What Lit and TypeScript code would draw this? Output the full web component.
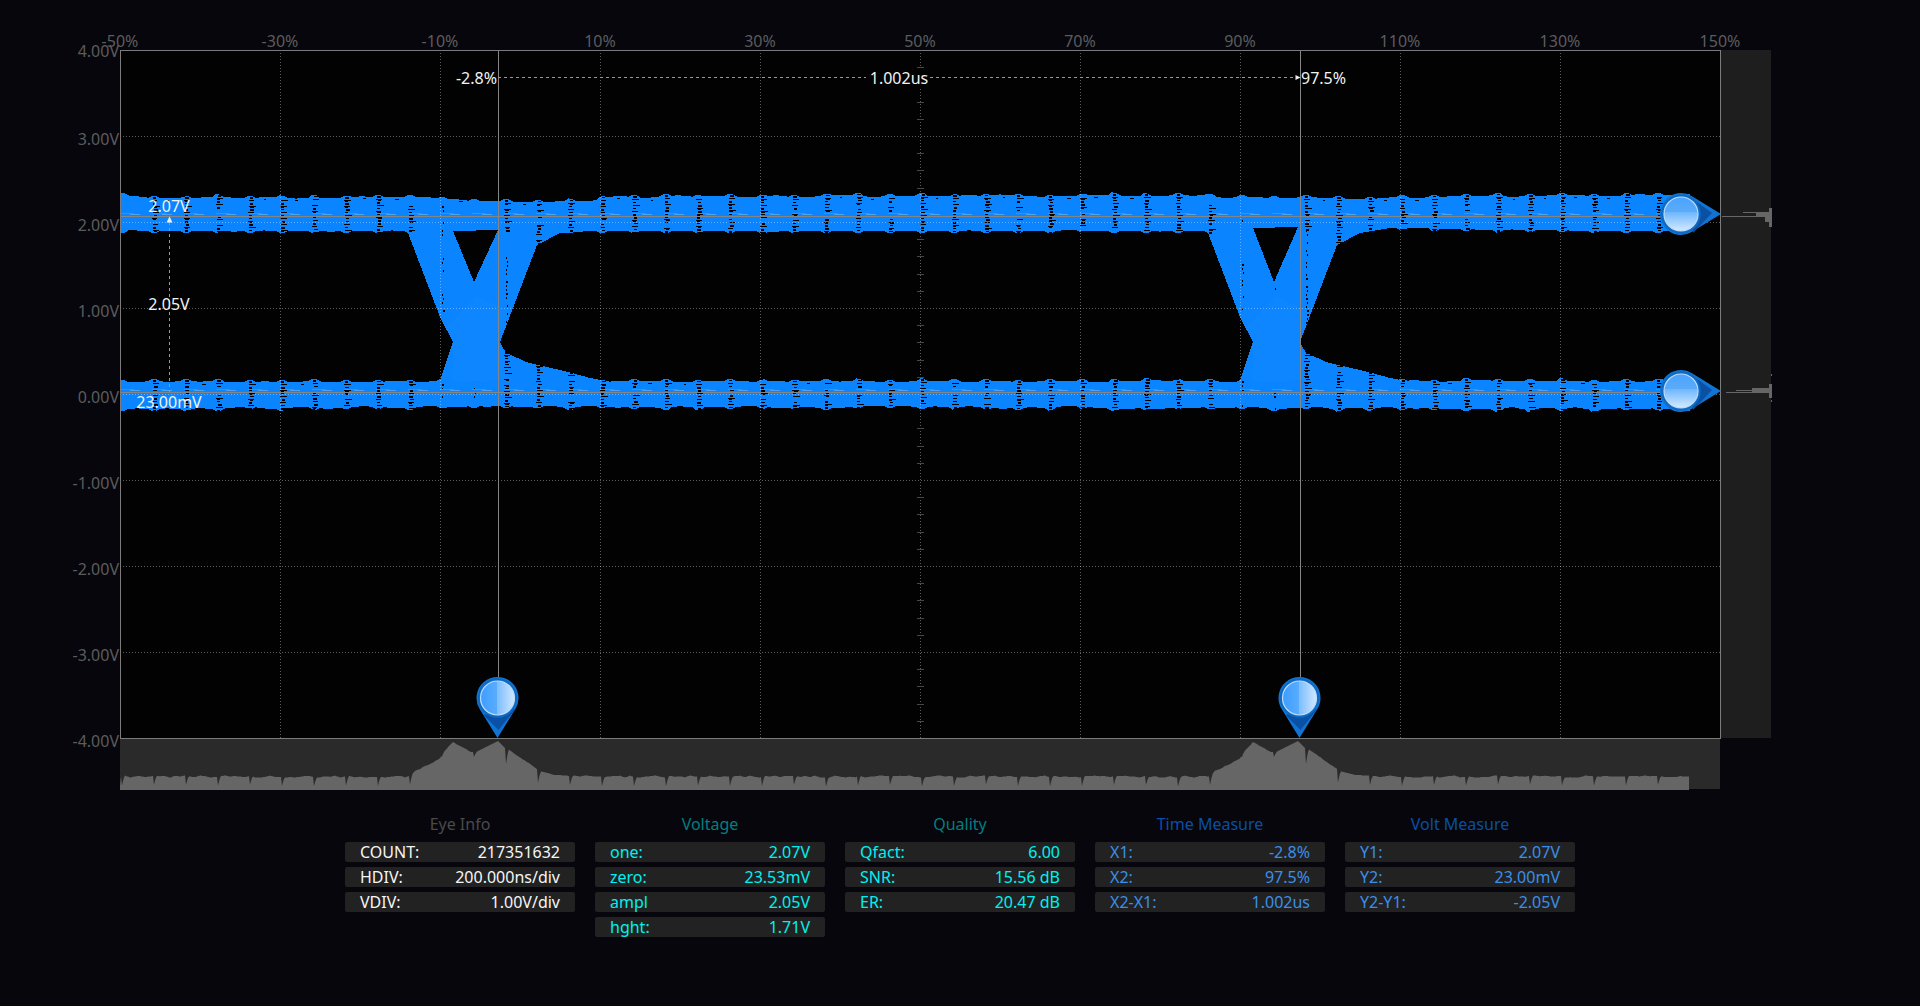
import { LitElement, html, css, svg } from "lit";
import { customElement } from "lit/decorators.js";

type Pt = [number, number];

function rng(seed: number) {
  let s = seed >>> 0;
  return () => {
    s = (s + 0x6d2b79f5) >>> 0;
    let t = s;
    t = Math.imul(t ^ (t >>> 15), t | 1);
    t ^= t + Math.imul(t ^ (t >>> 7), t | 61);
    return ((t ^ (t >>> 14)) >>> 0) / 4294967296;
  };
}

function interp(pts: Pt[], x: number): number {
  if (x <= pts[0][0]) return pts[0][1];
  for (let i = 1; i < pts.length; i++) {
    if (x <= pts[i][0]) {
      const [x0, y0] = pts[i - 1];
      const [x1, y1] = pts[i];
      return y0 + ((y1 - y0) * (x - x0)) / (x1 - x0 || 1);
    }
  }
  return pts[pts.length - 1][1];
}

function noise(seed: number, amp: number, step = 16) {
  const r = rng(seed);
  const nodes: number[] = [];
  const count = Math.ceil(1700 / step) + 3;
  for (let i = 0; i < count; i++) nodes.push((r() - 0.5) * 2 * amp);
  return (x: number) => {
    const p = (x - 120) / step;
    const i = Math.max(0, Math.floor(p));
    const f = p - i;
    return nodes[i] * (1 - f) + nodes[i + 1] * f;
  };
}

const toPath = (pts: Pt[]) =>
  "M" + pts.map(([x, y]) => `${x} ${y}`).join("L") + "Z";

const X0 = 120;
const X1 = 1690;

const upTop: Pt[] = [[120, 194.5], [150, 197.5], [430, 197.5], [440, 199], [470, 201], [590, 201], [620, 196.5], [1200, 195.5], [1240, 198], [1370, 198], [1400, 197], [1690, 195]];
const upBot: Pt[] = [[120, 231], [1240, 231], [1252, 228], [1395, 228], [1500, 230], [1690, 231]];
const loTop: Pt[] = [[120, 381.5], [1690, 381]];
const loBot: Pt[] = [[120, 408.5], [440, 407], [1100, 407.5], [1690, 409]];

const nUT = noise(11, 1.5);
const nUB = noise(23, 0.6);
const nLT = noise(37, 0.9);
const nLB = noise(41, 1.6);

// each sampling column pushes the band edge out by a couple of pixels
const scallop = (x: number) => {
  const d = Math.abs(((x - 154 + 16) % 32 + 32) % 32 - 16);
  return d < 3 ? 2 : d < 6 ? 1 : 0;
};

const edge = (base: Pt[], n: (x: number) => number, dir: number) => (x: number) =>
  Math.round(interp(base, x) + n(x) + dir * scallop(x));

const fUT = edge(upTop, nUT, -1);
const fUB = edge(upBot, nUB, 1);
const fLT = edge(loTop, nLT, -1);
const fLB = edge(loBot, nLB, 1);

function band(top: (x: number) => number, bot: (x: number) => number): string {
  const a: Pt[] = [];
  const b: Pt[] = [];
  for (let x = X0; x <= X1; x += 2) {
    a.push([x, top(x)]);
    b.unshift([x, bot(x)]);
  }
  return toPath([...a, ...b]);
}

function eye(dx: number, triTop: number): string {
  const p: Pt[] = [
    [408, 225], [453, 225], [453, triTop], [474, 282], [498, triTop - 1], [498, 225], [590, 225],
    [590, 231 - (dx ? 3 : 0)], [560, 233], [537, 245], [500, 342], [505.7, 352.7], [528, 362.7], [567, 371.7], [590, 378], [612, 382],
    [612, 390], [440, 390], [440, 380], [453, 342], [440, 317], [408, 233],
  ];
  return toPath(p.map(([x, y]) => [x + dx, y] as Pt));
}

// black triangle mask keeps the eye opening clean where a scalloped band edge dips into it
const opening = (dx: number, triTop: number) =>
  toPath(([[453, triTop], [474, 282], [498, triTop - 1]] as Pt[]).map(([x, y]) => [x + dx, y] as Pt));

function stipple(): string {
  const r = rng(77);
  let d = "";
  const rect = (x: number, y: number, w: number, h: number) => {
    d += `M${x} ${y}h${w}v${h}h${-w}Z`;
  };
  const solid = (cx: number, y0: number, y1: number) => {
    let nextWide = y0 + 1 + Math.floor(r() * 3);
    for (let y = y0; y < y1; y += 3) {
      if (r() < 0.9) rect(cx - 1 + (r() < 0.3 ? 1 : 0), y, 3 + (r() < 0.35 ? 1 : 0), 1 + (r() < 0.55 ? 1 : 0));
      if (y >= nextWide) {
        const w = 5 + Math.floor(r() * 3);
        rect(cx - 2 + (r() < 0.5 ? 1 : 0), y, w, 1);
        nextWide = y + 4 + Math.floor(r() * 4);
      }
    }
  };
  const sparse = (cx: number, y0: number, y1: number, density = 0.45) => {
    for (let y = y0; y < y1; y += 4) {
      if (r() < density) rect(cx + (r() < 0.3 ? 1 : 0), y, 1 + (r() < 0.3 ? 1 : 0), 2);
    }
  };
  for (let cx = 154; cx < X1; cx += 32) {
    const rel = cx >= 1100 ? cx - 800 : cx;
    const ut = fUT(cx) + 1;
    const ub = fUB(cx);
    const lt = fLT(cx) + 1;
    const lb = fLB(cx);
    if (rel === 442) {
      sparse(cx, ut + 8, 317, 0.4);
      sparse(cx, lt, lb, 0.5);
    } else if (rel === 474) {
      sparse(cx, 284, 300, 0.2);
      sparse(cx, lt + 4, lb, 0.45);
    } else if (rel === 506) {
      solid(cx, ut, ub);
      sparse(cx, ub, 340, 0.6);
      solid(cx, 352, lb);
    } else if (rel === 538) {
      solid(cx, ut, 245);
      solid(cx, 363, lb);
    } else if (rel === 570) {
      solid(cx, ut, ub);
      solid(cx, 372, lb);
    } else if (rel === 410) {
      solid(cx, ut + 10, ub);
      solid(cx, lt, lb);
    } else {
      solid(cx, ut, ub);
      solid(cx, lt, lb);
    }
    if (cx + 16 < X1) {
      if (r() < 0.5) rect(cx + 12 + Math.floor(r() * 6), fUT(cx + 16) + 2, 2 + Math.floor(r() * 3), 1);
      if (r() < 0.3 && Math.abs(rel - 474) > 40) rect(cx + 10 + Math.floor(r() * 10), fLT(cx + 16) + 2, 2 + Math.floor(r() * 3), 1);
    }
  }
  return d;
}

const peak: Pt[] = [[410, 776], [415, 771], [430, 764], [440, 758], [443, 753], [453, 742], [471, 752], [476, 752], [498, 741], [503, 746], [506, 749], [508, 749], [537, 769], [540, 771], [555, 775], [570, 776]];

function histogram(): string {
  const n = noise(91, 1.1, 5);
  const pts: Pt[] = [[120, 790], [120, 786]];
  for (let x = 121; x <= 1689; x++) {
    const rel = x >= 1100 ? x - 800 : x;
    const inPeak = rel >= 410 && rel <= 570;
    let y = inPeak ? interp(peak, rel) : 776.5;
    y += inPeak ? n(x) * 0.3 : n(x);
    const phase = (x - 122) % 32;
    let depth = 9;
    if (rel > 436 && rel < 446) depth = 2;
    if (rel > 468 && rel < 478) depth = 5;
    if (rel > 500 && rel < 510) depth = 15;
    if (rel > 532 && rel < 542) depth = 13;
    if (phase === 0) y += depth;
    else if (phase === 1) y += depth * 0.55;
    else if (phase === 2) y += depth * 0.2;
    pts.push([x, Math.round(y * 2) / 2]);
  }
  pts.push([1689, 790]);
  return toPath(pts);
}

const D = {
  upper: band(fUT, fUB),
  lower: band(fLT, fLB),
  eyes: eye(0, 231) + eye(800, 228),
  openings: opening(0, 231) + opening(800, 228),
  dots: stipple(),
  hist: histogram(),
};

const xLabels = ["-50%", "-30%", "-10%", "10%", "30%", "50%", "70%", "90%", "110%", "130%", "150%"];
const yLabels = ["4.00V", "3.00V", "2.00V", "1.00V", "0.00V", "-1.00V", "-2.00V", "-3.00V", "-4.00V"];

const TEAR = "M0 40L17.87 11.03A21 21 0 1 0 -17.87 11.03Z";

const downPin = (cx: number) => svg`
  <g transform="translate(${cx} 698)">
    <path class="pin-body" d=${TEAR}></path>
    <path class="pin-shade" d="M-14 17L1 32L17.8 11.2L12 10Z"></path>
    <circle class="pin-ring" r="19.800"></circle>
    <circle class="pin-face-v" r="17"></circle>
  </g>`;

const rightPin = (cy: number) => svg`
  <g transform="translate(1681 ${cy})">
    <g transform="rotate(-90)">
      <path class="pin-body" d=${TEAR}></path>
      <path class="pin-shade" d="M-19 12L1 31L12 16L12 10Z"></path>
      <circle class="pin-ring" r="19.800"></circle>
    </g>
    <circle class="pin-face-h" r="17"></circle>
  </g>`;

interface Row { k: string; v: string; }
interface Group { title: string; tone: string; rows: Row[]; }

const groups: Group[] = [
  { title: "Eye Info", tone: "grey", rows: [
    { k: "COUNT:", v: "217351632" }, { k: "HDIV:", v: "200.000ns/div" }, { k: "VDIV:", v: "1.00V/div" },
  ] },
  { title: "Voltage", tone: "cyan", rows: [
    { k: "one:", v: "2.07V" }, { k: "zero:", v: "23.53mV" }, { k: "ampl", v: "2.05V" }, { k: "hght:", v: "1.71V" },
  ] },
  { title: "Quality", tone: "cyan", rows: [
    { k: "Qfact:", v: "6.00" }, { k: "SNR:", v: "15.56 dB" }, { k: "ER:", v: "20.47 dB" },
  ] },
  { title: "Time Measure", tone: "blue", rows: [
    { k: "X1:", v: "-2.8%" }, { k: "X2:", v: "97.5%" }, { k: "X2-X1:", v: "1.002us" },
  ] },
  { title: "Volt Measure", tone: "blue", rows: [
    { k: "Y1:", v: "2.07V" }, { k: "Y2:", v: "23.00mV" }, { k: "Y2-Y1:", v: "-2.05V" },
  ] },
];

@customElement("app-root")
export class AppRoot extends LitElement {
  static styles = css`
    :host {
      display: block;
      min-height: 100vh;
      background: #06060c;
      font-family: "Noto Sans", "Liberation Sans", sans-serif;
      font-size: 16px;
    }
    .chart { display: block; width: 1920px; height: 800px; }
    .plot-bg { fill: #020202; }
    .side { fill: #1e1e1e; }
    .hist-bg { fill: #2a2a2a; }
    .hist { fill: #666; }
    .side-mark { fill: #666; shape-rendering: crispEdges; }
    .wave { fill: #0a84ff; shape-rendering: crispEdges; }
    .opening { fill: #020202; shape-rendering: crispEdges; }
    .waist { fill: #4aa8ff; opacity: 0.07; }
    .dots { fill: #000; shape-rendering: crispEdges; }
    .streak { stroke: #2f94f8; stroke-width: 1; stroke-dasharray: 14 18; shape-rendering: crispEdges; }
    .streak2 { stroke: #4ea4f0; stroke-width: 1; stroke-dasharray: 10 22; shape-rendering: crispEdges; }
    .grid { stroke: #fff; stroke-opacity: 0.36; stroke-width: 1; stroke-dasharray: 1 2; shape-rendering: crispEdges; }
    .tick { stroke: #474747; stroke-width: 1; shape-rendering: crispEdges; }
    .cursor { stroke: #858585; stroke-width: 1; shape-rendering: crispEdges; }
    .dash { stroke: #989898; stroke-width: 1; stroke-dasharray: 3 3; shape-rendering: crispEdges; }
    .frame { fill: none; stroke: #7c7c7c; stroke-width: 1; shape-rendering: crispEdges; }
    .axis { fill: #5c5c5c; font-size: 16px; dominant-baseline: central; }
    .read { fill: #f2f2f2; font-size: 16px; dominant-baseline: central; }
    .mask { fill: #020202; }
    .arrow { fill: #eee; }
    .pin-body { fill: #1274d2; }
    .pin-shade { fill: #0a50a4; }
    .pin-ring { fill: #0e69c2; }
    .pin-face-v { fill: url(#faceV); stroke: #bcdcff; stroke-width: 1.2; }
    .pin-face-h { fill: url(#faceH); stroke: #bcdcff; stroke-width: 1.2; }

    .panel {
      display: flex;
      justify-content: center;
      align-items: flex-start;
      gap: 20px;
      padding-top: 14px;
    }
    .group { width: 230px; display: flex; flex-direction: column; gap: 5px; }
    .title { height: 20px; line-height: 20px; text-align: center; margin-bottom: 3px; }
    .row {
      display: flex;
      justify-content: space-between;
      height: 20px;
      line-height: 20px;
      padding: 0 15px;
      background: #222;
      border-radius: 2px;
    }
    .grey .title { color: #4a4a4a; }
    .grey .row { color: #f5f5f5; }
    .cyan .title { color: #007f80; }
    .cyan .row { color: #00f0f0; }
    .blue .title { color: #0a4fa6; }
    .blue .row { color: #3a8fe8; }
  `;

  private chart() {
    const gx = xLabels.map((_, i) => 120 + i * 160);
    const gy = yLabels.map((_, i) => 50 + i * 86);
    const ticks: number[] = [];
    for (let i = 1; i < 40; i++) if (i % 5) ticks.push(50 + i * 17.2);
    return html`
      <svg class="chart" viewBox="0 0 1920 800">
        <defs>
          <linearGradient id="faceV" x1="0" x2="1" y1="0" y2="0">
            <stop offset="0" stop-color="#3d9dff"></stop>
            <stop offset="0.5" stop-color="#5aadff"></stop>
            <stop offset="0.5" stop-color="#7fbeff"></stop>
            <stop offset="1" stop-color="#cfe7ff"></stop>
          </linearGradient>
          <linearGradient id="faceH" x1="0" x2="0" y1="0" y2="1">
            <stop offset="0" stop-color="#4aa4ff"></stop>
            <stop offset="0.45" stop-color="#5cabf8"></stop>
            <stop offset="0.45" stop-color="#6fb7ff"></stop>
            <stop offset="1" stop-color="#d4eaff"></stop>
          </linearGradient>
        </defs>

        <rect class="plot-bg" x="120" y="50" width="1600" height="688"></rect>
        <rect class="side" x="1721" y="50" width="50" height="688"></rect>
        <rect class="hist-bg" x="120" y="739" width="1600" height="50"></rect>
        <path class="hist" d=${D.hist}></path>

        <path class="side-mark" d="M1722 216h49v1h-49ZM1743 212h13v1h-13ZM1756 212h15v5h-15ZM1765 217h6v5h-6ZM1769 208h3v19h-3Z"></path>
        <path class="side-mark" d="M1726 392h45v1h-45ZM1736 390h16v1h-16ZM1752 388h19v5h-19ZM1769 384h3v14h-3ZM1771 374h1v2h-1ZM1771 400h1v2h-1Z"></path>

        <path class="wave" d=${D.upper}></path>
        <path class="wave" d=${D.lower}></path>
        <path class="wave" d=${D.eyes}></path>
        <path class="opening" d=${D.openings}></path>
        <path class="waist" d="M445 328L476 296L512 312L500 342L512 380L452 382L453 342Z"></path>
        <path class="waist" d="M1245 328L1276 296L1312 312L1300 342L1312 380L1252 382L1253 342Z"></path>
        <path class="dots" d=${D.dots}></path>

        <line class="streak" x1="120" x2="1690" y1="213.5" y2="213.5"></line>
        <line class="streak2" x1="130" x2="1690" y1="214.5" y2="214.5"></line>
        <line class="streak" x1="120" x2="1690" y1="389.5" y2="389.5"></line>
        <line class="streak2" x1="130" x2="1690" y1="390.5" y2="390.5"></line>

        ${gx.slice(1, -1).map((x) => svg`<line class="grid" x1=${x + 0.5} x2=${x + 0.5} y1="50" y2="738"></line>`)}
        ${gy.slice(1, -1).map((y) => svg`<line class="grid" x1="120" x2="1720" y1=${y + 0.5} y2=${y + 0.5}></line>`)}
        ${ticks.filter((y) => y < 190 || (y > 235 && y < 380) || y > 412).map((y) => svg`<line class="tick" x1="917" x2="924" y1=${Math.round(y) + 0.5} y2=${Math.round(y) + 0.5}></line>`)}

        <line class="cursor" x1="120" x2="1665" y1="216.500" y2="216.500"></line>
        <line class="cursor" x1="120" x2="1665" y1="392.500" y2="392.500"></line>
        <line class="cursor" x1="498.500" x2="498.500" y1="50" y2="680"></line>
        <line class="cursor" x1="1300.500" x2="1300.500" y1="50" y2="680"></line>

        <line class="dash" x1="498" x2="1298" y1="77.5" y2="77.5"></line>
        <line class="dash" x1="169.5" x2="169.5" y1="222" y2="392"></line>
        <path class="arrow" d="M169.5 216.500L172.500 222.500H166.500Z"></path>
        <path class="arrow" d="M1300.500 77.500L1295.500 75V80Z"></path>

        ${xLabels.map((t, i) => svg`<text class="axis" x=${gx[i]} y="40.500" text-anchor="middle">${t}</text>`)}
        ${yLabels.map((t, i) => svg`<text class="axis" x="119" y=${gy[i] + (i === 0 ? 1 : 3)} text-anchor="end">${t}</text>`)}

        <rect class="mask" x="866" y="68" width="64" height="20"></rect>
        <text class="read" x="899" y="78" text-anchor="middle">1.002us</text>
        <text class="read" x="497" y="78" text-anchor="end">-2.8%</text>
        <text class="read" x="1301" y="78">97.5%</text>
        <text class="read" x="169" y="206" text-anchor="middle">2.07V</text>
        <text class="read" x="169" y="304" text-anchor="middle">2.05V</text>
        <text class="read" x="169" y="402" text-anchor="middle">23.00mV</text>

        <rect class="frame" x="120.5" y="50.5" width="1600" height="688"></rect>

        ${rightPin(214)}
        ${rightPin(391)}
        ${downPin(497.5)}
        ${downPin(1299.5)}
      </svg>
    `;
  }

  render() {
    return html`
      ${this.chart()}
      <div class="panel">
        ${groups.map(
          (g) => html`
            <section class="group ${g.tone}">
              <div class="title">${g.title}</div>
              ${g.rows.map(
                (r) => html`<div class="row"><span>${r.k}</span><span>${r.v}</span></div>`
              )}
            </section>
          `
        )}
      </div>
    `;
  }
}
